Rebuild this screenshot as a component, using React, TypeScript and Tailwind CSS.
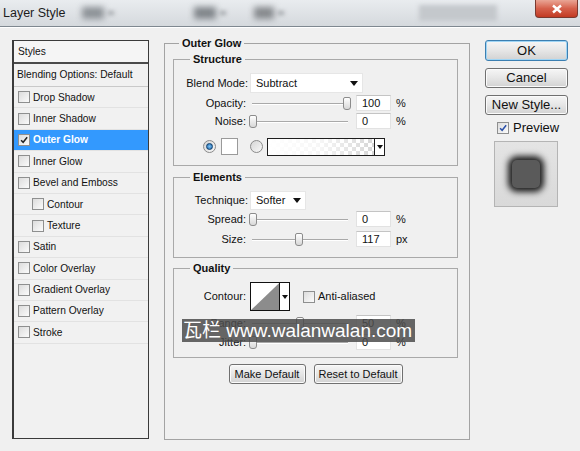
import type { ReactNode } from 'react';

const font = "font-['Liberation_Sans','Noto_Sans_CJK_SC',Arial,sans-serif]";

const styleRows: { label: string; checked?: boolean; selected?: boolean; nested?: boolean }[] = [
  { label: 'Drop Shadow' },
  { label: 'Inner Shadow' },
  { label: 'Outer Glow', checked: true, selected: true },
  { label: 'Inner Glow' },
  { label: 'Bevel and Emboss' },
  { label: 'Contour', nested: true },
  { label: 'Texture', nested: true },
  { label: 'Satin' },
  { label: 'Color Overlay' },
  { label: 'Gradient Overlay' },
  { label: 'Pattern Overlay' },
  { label: 'Stroke' },
];

function CheckMark({ className }: { className: string }) {
  return (
    <svg viewBox="0 0 12 12" className={className}>
      <path d="M2.5 6.2 L5 8.8 L9.8 2.8" fill="none" stroke="currentColor" strokeWidth="1.8" />
    </svg>
  );
}

function Checkbox({ checked = false, tone = 'text-[#222]' }: { checked?: boolean; tone?: string }) {
  return (
    <span className="flex h-[12px] w-[12px] shrink-0 items-center justify-center border border-[#8e8f8f] bg-linear-to-br from-[#dcdcdc] to-[#fbfbfb]">
      {checked ? <CheckMark className={`h-[10px] w-[10px] ${tone}`} /> : null}
    </span>
  );
}

function DownArrow() {
  return (
    <svg viewBox="0 0 8 5" className="h-[5px] w-[8px]">
      <polygon points="0,0 8,0 4,5" fill="#111" />
    </svg>
  );
}

function Label({ children, w = 'w-[72px]' }: { children: ReactNode; w?: string }) {
  return <span className={`${w} shrink-0 text-right`}>{children}</span>;
}

function Slider({ frac }: { frac: number }) {
  return (
    <div className="relative ml-[3px] h-[13px] w-[102px] shrink-0">
      <div className="absolute left-[3px] right-[3px] top-[6px] h-[2px] border-t border-[#a9a9a9] bg-white" />
      <div
        className="absolute top-0 h-[13px] w-[8px] rounded-[2px] rounded-b-[3px] border border-[#8c8c8c] bg-linear-to-b from-white to-[#d8d8d8]"
        style={{ left: `${frac * 94}px` }}
      />
    </div>
  );
}

function NumberField({ value, unit }: { value: string; unit: string }) {
  return (
    <>
      <div className="ml-[5px] flex h-[16px] w-[35px] shrink-0 items-center border border-[#e2e2e2] border-t-[#c4c4c4] bg-white pl-[5px]">
        {value}
      </div>
      <span className="ml-[5px]">{unit}</span>
    </>
  );
}

function SliderRow({ label, frac, value, unit, className }: { label: string; frac: number; value: string; unit: string; className: string }) {
  return (
    <div className={`flex h-[16px] items-center ${className}`}>
      <Label>{label}</Label>
      <Slider frac={frac} />
      <NumberField value={value} unit={unit} />
    </div>
  );
}

function Radio({ on }: { on: boolean }) {
  return (
    <span className="flex h-[13px] w-[13px] shrink-0 items-center justify-center rounded-full border border-[#8a8a8a] bg-linear-to-br from-[#d6d6d6] to-[#f8f8f8]">
      {on ? <span className="h-[7px] w-[7px] rounded-full border border-[#0f3f6d] bg-radial from-[#7cc3f5] to-[#1c65a8]" /> : null}
    </span>
  );
}

function Group({ title, children, className }: { title: string; children: ReactNode; className: string }) {
  return (
    <fieldset className={`border border-[#a9a9a9] ${className}`}>
      <legend className="ml-[16px] px-[3px] text-[11px] font-bold leading-[14px]">{title}</legend>
      {children}
    </fieldset>
  );
}

function DialogButton({ children, primary = false, className }: { children: ReactNode; primary?: boolean; className: string }) {
  return (
    <button
      type="button"
      className={`flex items-center justify-center rounded-[3px] border bg-linear-to-b from-[#f6f6f6] via-[#e6e6e6] to-[#d2d2d2] ${
        primary ? 'border-[#3c7fb1] shadow-[inset_0_0_0_1px_#9fd5f5]' : 'border-[#707070] shadow-[inset_0_0_0_1px_#fbfbfb]'
      } ${className}`}
    >
      {children}
    </button>
  );
}

export default function App() {
  return (
    <div className={`relative h-[451px] w-[580px] overflow-hidden bg-[#f0f0f0] text-[#111] ${font}`}>
      {/* title bar */}
      <div className="relative flex h-[26px] items-center bg-linear-to-b from-[#e9ecef] to-[#d5d9dd]">
        <span className="ml-[3px] whitespace-nowrap text-[12.5px] text-[#1c1c1c]">Layer Style</span>
        <div className="ml-[16px] h-[12px] w-[22px] bg-[#8d9297] blur-[3px]" />
        <div className="ml-[4px] h-[4px] w-[6px] bg-[#a0a4a8] blur-[2px]" />
        <div className="ml-[80px] h-[12px] w-[22px] bg-[#80858a] blur-[3px]" />
        <div className="ml-[4px] h-[4px] w-[6px] bg-[#9da1a5] blur-[2px]" />
        <div className="ml-[28px] h-[12px] w-[20px] bg-[#86898d] blur-[3px]" />
        <div className="ml-[4px] h-[4px] w-[6px] bg-[#9da1a5] blur-[2px]" />
        <div className="ml-[135px] h-[16px] w-[78px] bg-[#c4c8cc] blur-[2px]" />
        <div className="ml-auto mr-[2px] flex h-[18px] w-[43px] self-start items-center justify-center rounded-b-[4px] border border-t-0 border-[#7a3a30] bg-linear-to-b from-[#e9a595] via-[#d5604b] to-[#c23a22]">
          <svg viewBox="0 0 12 10" className="h-[10px] w-[12px]">
            <path d="M2 1.5 L10 8.5 M10 1.5 L2 8.5" stroke="#fff" strokeWidth="2.4" />
          </svg>
        </div>
      </div>
      <div className="h-px bg-[#7f8890]" />
      <div className="h-px bg-white" />

      <div className="flex text-[11px]">
        {/* styles list */}
        <div className="ml-[12px] mt-[12px] flex h-[399px] w-[137px] flex-col border border-l-2 border-[#3b3b3b] bg-[#f1f1f1] text-[10.2px]">
          <div className="flex h-[23px] items-center border-b-2 border-[#4a4a4a] bg-[#f5f5f5] pl-[4px]">Styles</div>
          <div className="flex h-[23px] items-center border-b border-[#c9c9c9] pl-[3px]">Blending Options: Default</div>
          {styleRows.map((row) => (
            <div
              key={row.label}
              className={`flex h-[21.4px] items-center gap-[3px] border-b border-[#e2e2e2] ${row.nested ? 'pl-[18px]' : 'pl-[4px]'} ${
                row.selected ? 'bg-[#3399fe] font-bold text-white' : ''
              }`}
            >
              <Checkbox checked={row.checked} />
              <span>{row.label}</span>
            </div>
          ))}
        </div>

        {/* settings */}
        <div className="ml-[15px] mt-[8px] w-[306px]">
          <fieldset className="border border-[#a3a3a3] pb-[55px] pl-[8px] pr-[11px] pt-[2px]">
            <legend className="ml-[6px] px-[3px] text-[11px] font-bold leading-[14px]">Outer Glow</legend>

            <Group title="Structure" className="pb-[10px] pt-[7px]">
              <div className="flex h-[20px] items-center">
                <Label w="w-[74px]">Blend Mode:</Label>
                <div className="ml-[2px] flex h-[20px] w-[113px] items-center justify-between border border-[#e6e6e6] bg-white pl-[5px] pr-[4px]">
                  <span>Subtract</span>
                  <DownArrow />
                </div>
              </div>
              <SliderRow label="Opacity:" frac={1} value="100" unit="%" className="mt-[2px]" />
              <SliderRow label="Noise:" frac={0} value="0" unit="%" className="mt-[2px]" />
              <div className="mt-[9px] flex h-[17px] items-center">
                <span className="ml-[29px]"><Radio on /></span>
                <span className="ml-[5px] h-[17px] w-[17px] border border-[#9a9a9a] bg-white" />
                <span className="ml-[12px]"><Radio on={false} /></span>
                <div className="ml-[4px] flex h-[18px] w-[118px] border border-[#1e1e1e]">
                  <div className="flex-1 bg-[repeating-conic-gradient(#d2d2d2_0_25%,#ffffff_0_50%)] bg-size-[8px_8px]">
                    <div className="h-full w-full bg-linear-to-r from-white via-white/80 to-white/10" />
                  </div>
                  <div className="flex w-[10px] items-center justify-center border-l border-[#1e1e1e] bg-white">
                    <svg viewBox="0 0 6 4" className="h-[4px] w-[6px]">
                      <polygon points="0,0 6,0 3,4" fill="#111" />
                    </svg>
                  </div>
                </div>
              </div>
            </Group>

            <Group title="Elements" className="mt-[4px] pb-[10px] pt-[7px]">
              <div className="flex h-[19px] items-center">
                <Label w="w-[74px]">Technique:</Label>
                <div className="ml-[2px] flex h-[19px] w-[56px] items-center justify-between border border-[#e6e6e6] bg-white pl-[5px] pr-[4px]">
                  <span>Softer</span>
                  <DownArrow />
                </div>
              </div>
              <SliderRow label="Spread:" frac={0} value="0" unit="%" className="mt-[1px]" />
              <SliderRow label="Size:" frac={0.49} value="117" unit="px" className="mt-[4px]" />
            </Group>

            <Group title="Quality" className="mt-[3px] pb-[7px] pt-[7px]">
              <div className="flex h-[29px] items-center">
                <Label>Contour:</Label>
                <div className="ml-[4px] flex h-[29px] w-[40px] border border-[#111]">
                  <svg viewBox="0 0 30 27" preserveAspectRatio="none" className="h-full w-[29px]">
                    <rect width="30" height="27" fill="#fff" />
                    <polygon points="0,27 30,0 30,27" fill="#8c8c8c" />
                  </svg>
                  <div className="flex w-[10px] items-center justify-center border-l border-[#111] bg-white">
                    <svg viewBox="0 0 6 4" className="h-[4px] w-[6px]">
                      <polygon points="0,0 6,0 3,4" fill="#111" />
                    </svg>
                  </div>
                </div>
                <span className="ml-[13px]"><Checkbox /></span>
                <span className="ml-[3px]">Anti-aliased</span>
              </div>
              <SliderRow label="Range:" frac={0.5} value="50" unit="%" className="mt-[4px]" />
              <SliderRow label="Jitter:" frac={0} value="0" unit="%" className="mt-[3px]" />
            </Group>

            <div className="mt-[6px] flex justify-center gap-[8px]">
              <DialogButton className="h-[20px] w-[77px]">Make Default</DialogButton>
              <DialogButton className="h-[20px] w-[89px]">Reset to Default</DialogButton>
            </div>
          </fieldset>
        </div>

        {/* buttons */}
        <div className="ml-[15px] mt-[12px] flex w-[83px] flex-col text-[13px]">
          <DialogButton primary className="h-[21px] w-[83px]">OK</DialogButton>
          <DialogButton className="mt-[7px] h-[20px] w-[83px]">Cancel</DialogButton>
          <DialogButton className="mt-[7px] h-[20px] w-[83px]">New Style...</DialogButton>
          <div className="mt-[7px] flex h-[12px] items-center pl-[12px]">
            <Checkbox checked tone="text-[#2a4fa8]" />
            <span className="ml-[4px]">Preview</span>
          </div>
          <div className="ml-[9px] mt-[7px] flex h-[66px] w-[64px] items-center justify-center border border-[#b4b4b4] bg-linear-to-b from-[#e4e4e4] to-[#d9d9d9]">
            <div className="h-[28px] w-[28px] rounded-[5px] bg-[#5a5a5a] shadow-[0_0_6px_4px_#1c1c1c]" />
          </div>
        </div>
      </div>

      {/* watermark */}
      <div className="absolute left-[182px] top-[319px] flex h-[23px] w-[233px] items-center bg-[#4c4c4c]/85 pl-[1px] text-[19px] leading-none text-white">
        瓦栏 www.walanwalan.com
      </div>
    </div>
  );
}
